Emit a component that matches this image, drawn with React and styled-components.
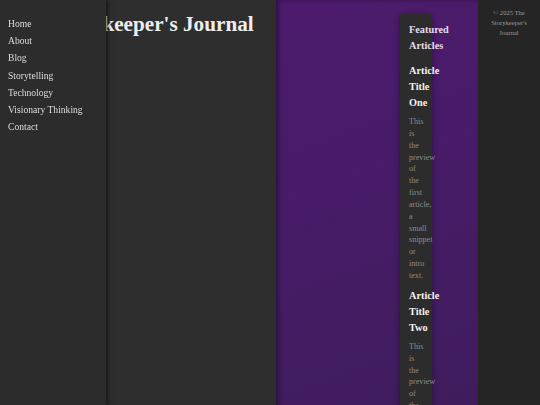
import styled, { createGlobalStyle } from 'styled-components'

const GlobalStyle = createGlobalStyle`
  html, body {
    margin: 0;
    padding: 0;
    background: #2e2e2e;
    font-family: "Liberation Serif", "Times New Roman", serif;
    overflow: hidden;
  }
`

const Layout = styled.div`
  display: grid;
  grid-template-columns: 276px 202px 62px;
  min-height: 100vh;
`

const Sidebar = styled.nav`
  position: fixed;
  top: 0;
  left: 0;
  bottom: 0;
  width: 106px;
  background: #2c2c2c;
  box-shadow: 2px 0 4px rgba(0, 0, 0, 0.55);
  padding: 15px 0 0 8px;
  box-sizing: border-box;
  z-index: 10;
`

const NavLink = styled.a`
  display: block;
  color: #dcdcdc;
  font-size: 9.6px;
  line-height: 17.2px;
  text-decoration: none;
  white-space: nowrap;
`

const Main = styled.main`
  background: #2e2e2e;
`

const Title = styled.h1`
  margin: 13px 0 0;
  padding-right: 10px;
  text-align: center;
  color: #eeeeee;
  font-size: 21.2px;
  line-height: 23px;
  font-weight: 700;
  white-space: nowrap;
`

const Featured = styled.section`
  background: linear-gradient(160deg, #4d1b6e 0%, #451c65 50%, #3e1c57 100%);
  box-shadow: inset 3px 0 4px rgba(0, 0, 0, 0.35);
  display: flex;
  justify-content: flex-end;
  align-items: flex-start;
  padding: 13px 46px 0 0;
`

const Card = styled.div`
  width: 32px;
  min-height: 420px;
  box-sizing: border-box;
  padding: 9px 20px 0 9px;
  background: #2c2c2c;
  border-radius: 4px;
  box-shadow: 0 2px 6px rgba(0, 0, 0, 0.4);
`

const CardHeading = styled.h2`
  margin: 0 0 9px;
  color: #e6dcef;
  font-size: 10.3px;
  line-height: 16px;
  font-weight: 700;
`

const ArticleTitle = styled.h3`
  margin: 0 0 5px;
  color: #f2f2f2;
  font-size: 10.3px;
  line-height: 16px;
  font-weight: 700;
`

const Preview = styled.p`
  margin: 0 0 6px;
  color: #8c8c8c;
  font-size: 8.1px;
  line-height: 11.85px;
`

const Aside = styled.aside`
  background: #252525;
  padding-top: 8px;
  text-align: center;
`

const Copy = styled.p`
  margin: 0 auto;
  width: 44px;
  color: #9a9a9a;
  font-size: 6.6px;
  line-height: 10px;
`

const links = ['Home', 'About', 'Blog', 'Storytelling', 'Technology', 'Visionary Thinking', 'Contact']

const articles = [
  { title: 'Article Title One', text: 'This is the preview of the first article, a small snippet or intro text.' },
  { title: 'Article Title Two', text: 'This is the preview of the second article, a small snippet or intro text.' },
]

export default function App() {
  return (
    <>
      <GlobalStyle />
      <Sidebar>
        {links.map((l) => (
          <NavLink key={l} href="#">{l}</NavLink>
        ))}
      </Sidebar>
      <Layout>
        <Main>
          <Title>The Storykeeper's Journal</Title>
        </Main>
        <Featured>
          <Card>
            <CardHeading>Featured Articles</CardHeading>
            {articles.map((a) => (
              <div key={a.title}>
                <ArticleTitle>{a.title}</ArticleTitle>
                <Preview>{a.text}</Preview>
              </div>
            ))}
          </Card>
        </Featured>
        <Aside>
          <Copy>© 2025 The Storykeeper's Journal</Copy>
        </Aside>
      </Layout>
    </>
  )
}
